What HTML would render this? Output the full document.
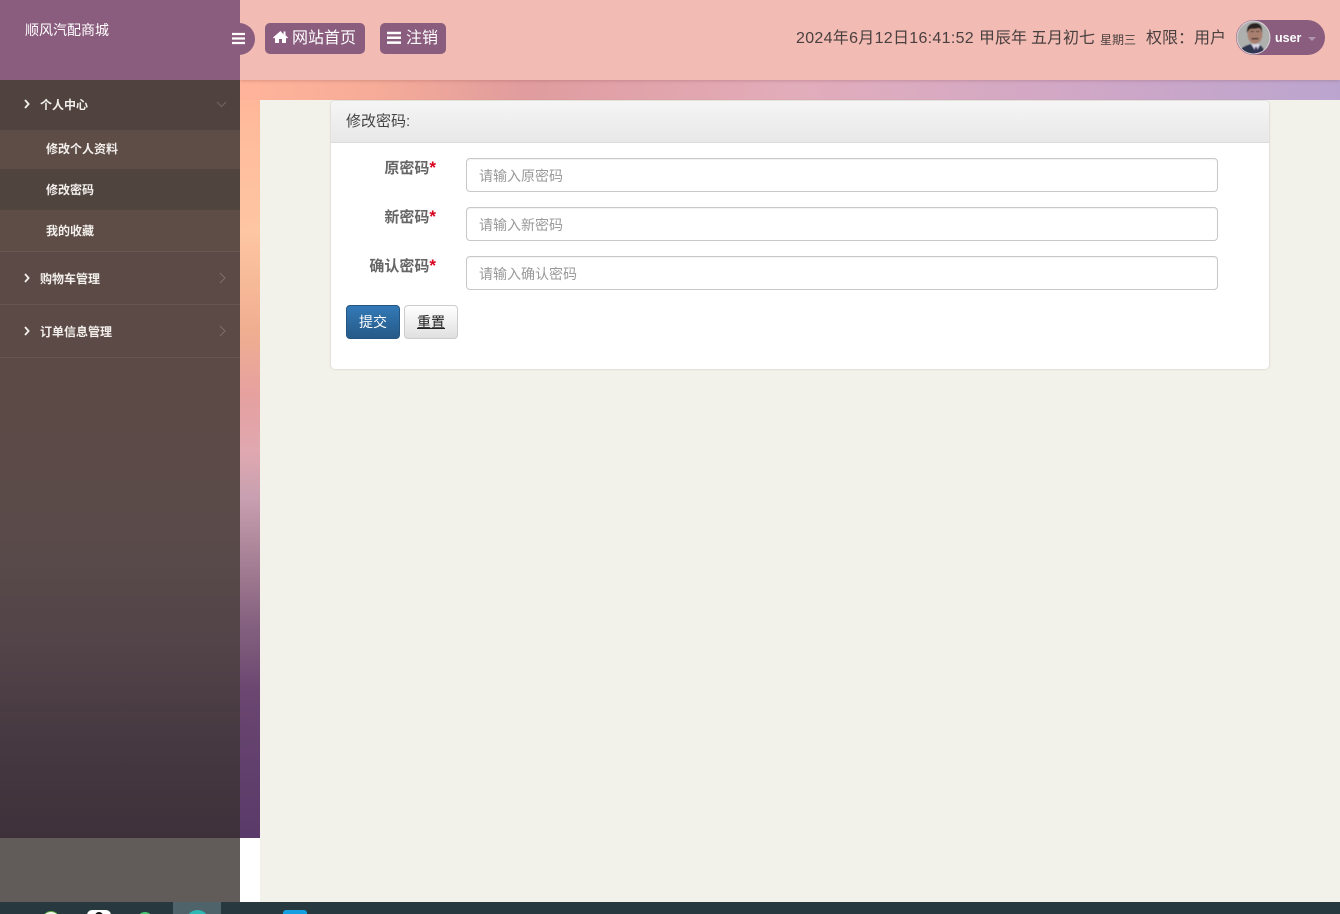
<!DOCTYPE html>
<html lang="zh">
<head>
<meta charset="utf-8">
<title>修改密码</title>
<style>
html,body{margin:0;padding:0;width:1340px;height:914px;overflow:hidden;background:#fff}
body{position:relative;font-family:"Liberation Sans","Noto Sans CJK SC",sans-serif;color:#333}
.a{position:absolute;white-space:nowrap}
svg{position:absolute;display:block}
.input{position:absolute;left:466px;width:750px;height:32px;border:1px solid #c8c8c8;border-radius:4px;background:#fff;box-shadow:inset 0 1px 1px rgba(0,0,0,.05);font-size:14px;line-height:35px;color:#999;text-indent:12px}
.lab{position:absolute;right:904px;font-size:15px;font-weight:700;color:#666;line-height:20px;white-space:nowrap}
.lab b{color:#d9001b;font-size:17px;line-height:16px}
.menu{font-size:12px;font-weight:700;color:#f2efec;line-height:18px}
.div{position:absolute;left:0;width:240px;height:1px;background:#675750}
</style>
</head>
<body>
<!-- page gradients -->
<div class="a" style="left:240px;top:80px;width:20px;height:758px;background:linear-gradient(180deg,#ffb298 0,#ffbb9c 6%,#fec6a2 20%,#f0ae90 33%,#e5a0a0 42%,#e0a8b0 49%,#c8a0b0 55%,#a07a90 65%,#84607f 72%,#6a4670 81%,#5a3a6a 100%)"></div>
<div class="a" style="left:240px;top:80px;width:1100px;height:20px;background:linear-gradient(90deg,#ffb49a 0,#f5ab98 13%,#e09c9e 26%,#e2adbb 51%,#cfa7c7 78%,#bba5cf 100%)"></div>
<div class="a" style="left:260px;top:100px;width:1080px;height:802px;background:#f3f2ea"></div>

<!-- sidebar -->
<div class="a" style="left:0;top:80px;width:240px;height:758px;background:linear-gradient(180deg,#5c4b46 0,#5c4a46 42%,#5a4b4a 60%,#524448 74%,#463840 88%,#3f313b 100%)"></div>
<div class="a" style="left:0;top:838px;width:240px;height:64px;background:#615c5a"></div>
<div class="a" style="left:0;top:80px;width:240px;height:50px;background:#50433f"></div>
<div class="a" style="left:0;top:130px;width:240px;height:39px;background:#5e4d46"></div>
<div class="a" style="left:0;top:169px;width:240px;height:41px;background:#50443f"></div>
<div class="a" style="left:0;top:210px;width:240px;height:41px;background:#5e4d46"></div>
<div class="div" style="top:251px"></div>
<div class="div" style="top:304px"></div>
<div class="div" style="top:357px"></div>

<div class="a menu" style="left:40px;top:96px">个人中心</div>
<div class="a menu" style="left:46px;top:140px">修改个人资料</div>
<div class="a menu" style="left:46px;top:181px">修改密码</div>
<div class="a menu" style="left:46px;top:222px">我的收藏</div>
<div class="a menu" style="left:40px;top:270px">购物车管理</div>
<div class="a menu" style="left:40px;top:323px">订单信息管理</div>

<svg style="left:24px;top:99px" width="8" height="10" viewBox="0 0 8 10"><path d="M1 1l3.600 4L1 9" fill="none" stroke="#f2efec" stroke-width="1.800"/></svg>
<svg style="left:24px;top:273px" width="8" height="10" viewBox="0 0 8 10"><path d="M1 1l3.600 4L1 9" fill="none" stroke="#f2efec" stroke-width="1.800"/></svg>
<svg style="left:24px;top:326px" width="8" height="10" viewBox="0 0 8 10"><path d="M1 1l3.600 4L1 9" fill="none" stroke="#f2efec" stroke-width="1.800"/></svg>
<svg style="left:216px;top:101px" width="11" height="7" viewBox="0 0 11 7"><path d="M1 1l4.500 4.500L10 1" fill="none" stroke="#75675f" stroke-width="1"/></svg>
<svg style="left:219px;top:272px" width="7" height="12" viewBox="0 0 7 12"><path d="M1 1l5 5-5 5" fill="none" stroke="#7d7068" stroke-width="1"/></svg>
<svg style="left:219px;top:325px" width="7" height="12" viewBox="0 0 7 12"><path d="M1 1l5 5-5 5" fill="none" stroke="#7d7068" stroke-width="1"/></svg>

<!-- header -->
<div class="a" style="left:240px;top:0;width:1100px;height:80px;background:#f2bbb3;box-shadow:0 1px 3px rgba(120,60,60,.25)"></div>
<div class="a" style="left:0;top:0;width:240px;height:80px;background:#8a5c7e"></div>
<div class="a" style="left:25px;top:20px;font-size:14px;line-height:20px;color:#fff">顺风汽配商城</div>

<div class="a" style="left:223px;top:23px;width:32px;height:32px;border-radius:50%;background:#8a5c7e"></div>
<svg style="left:232px;top:32px" width="13" height="13" viewBox="0 0 13 13"><path d="M0 2h13M0 6.500h13M0 11h13" stroke="#fff" stroke-width="2.300"/></svg>

<div class="a" style="left:265px;top:23px;width:100px;height:31px;border-radius:5px;background:#8a5c7e"></div>
<svg style="left:273px;top:30px" width="15" height="14" viewBox="0 0 15 14"><path d="M7.500 1L0 7.500l1 1 1-.8V13h4V9h3v4h4V7.700l1 .8 1-1-2.500-2.200V1.500h-2v3L7.500 1z" fill="#fff"/></svg>
<div class="a" style="left:292px;top:27px;font-size:16px;line-height:24px;color:#fff">网站首页</div>

<div class="a" style="left:380px;top:23px;width:66px;height:31px;border-radius:5px;background:#8a5c7e"></div>
<svg style="left:387px;top:31px" width="14" height="14" viewBox="0 0 14 14"><path d="M0 2h14M0 6.800h14M0 11.600h14" stroke="#fff" stroke-width="2.500"/></svg>
<div class="a" style="left:406px;top:27px;font-size:16px;line-height:24px;color:#fff">注销</div>

<div class="a" style="left:796px;top:27px;font-size:16px;line-height:24px;color:#4a4040;letter-spacing:.3px">2024年6月12日16:41:52</div>
<div class="a" style="left:979px;top:27px;font-size:16px;line-height:24px;color:#4a4040">甲辰年</div>
<div class="a" style="left:1031px;top:27px;font-size:16px;line-height:24px;color:#4a4040">五月初七</div>
<div class="a" style="left:1100px;top:28px;font-size:12px;line-height:24px;color:#4a4040">星期三</div>
<div class="a" style="left:1146px;top:27px;font-size:16px;line-height:24px;color:#4a4040">权限：用户</div>

<div class="a" style="left:1236px;top:20px;width:89px;height:35px;border-radius:18px;background:#8a5c7e"></div>
<svg style="left:1236px;top:20px" width="35" height="35" viewBox="0 0 35 35">
  <defs>
    <clipPath id="c"><circle cx="17.500" cy="17.500" r="16"/></clipPath>
    <filter id="f"><feGaussianBlur stdDeviation=".45"/></filter>
  </defs>
  <circle cx="17.500" cy="17.500" r="17" fill="#d9cfd6"/>
  <g clip-path="url(#c)" filter="url(#f)">
    <rect width="35" height="35" fill="#aeb0ae"/>
    <path d="M2 35c1-6 5-9 13-11h6c4 1 7 3 8 11z" fill="#2f3450"/>
    <path d="M15 24l5 8 4-7-3-2z" fill="#d5d5e4"/>
    <path d="M19 27h2l1 8h-4z" fill="#38305c"/>
    <ellipse cx="19" cy="14" rx="7.500" ry="10" fill="#a98070"/>
    <path d="M11 13C10 5 15 3 19.500 3s7.500 3 6.500 10c-.5-3-1.500-4.500-3-5-3 1-7 .5-9 1-1 1-2 2-3 4z" fill="#2a2120"/>
    <path d="M15.500 18h7v1.500h-7z" fill="#4a332c"/>
    <path d="M14.500 11.500h3.500M20 11.500h3.500" stroke="#3a2a26" stroke-width="1"/>
  </g>
</svg>
<div class="a" style="left:1275px;top:29px;font-size:12.500px;font-weight:700;line-height:18px;color:#fff">user</div>
<div class="a" style="left:1308px;top:37px;width:0;height:0;border-left:4px solid transparent;border-right:4px solid transparent;border-top:4px solid #b096ac"></div>

<!-- card -->
<div class="a" style="left:331px;top:101px;width:938px;height:268px;background:#fff;border-radius:4px;box-shadow:0 0 2px rgba(0,0,0,.2)"></div>
<div class="a" style="left:331px;top:101px;width:938px;height:41px;border-radius:4px 4px 0 0;background:linear-gradient(180deg,#f5f5f5,#e8e8e8);border-bottom:1px solid #dcdcdc"></div>
<div class="a" style="left:346px;top:112px;font-size:15px;line-height:20px;color:#444">修改密码:</div>

<div class="lab" style="top:159px">原密码<b>*</b></div>
<div class="input" style="top:158px">请输入原密码</div>
<div class="lab" style="top:208px">新密码<b>*</b></div>
<div class="input" style="top:207px">请输入新密码</div>
<div class="lab" style="top:257px">确认密码<b>*</b></div>
<div class="input" style="top:256px">请输入确认密码</div>

<div class="a" style="left:346px;top:305px;width:52px;height:32px;border:1px solid #245580;border-radius:4px;background:linear-gradient(180deg,#337ab7,#265a88);color:#fff;font-size:14px;line-height:33px;text-align:center">提交</div>
<div class="a" style="left:404px;top:305px;width:52px;height:32px;border:1px solid #ccc;border-radius:4px;background:linear-gradient(180deg,#fff,#e0e0e0);color:#222;font-size:14px;line-height:33px;text-align:center;text-decoration:underline">重置</div>

<!-- taskbar -->
<div class="a" style="left:0;top:902px;width:1340px;height:12px;background:#27393f;overflow:hidden">
  <div class="a" style="left:173px;top:0;width:48px;height:12px;background:#4f636a"></div>
  <div class="a" style="left:42px;top:9px;width:18px;height:18px;border-radius:50%;background:#f3f5ee;border-top:1px solid #5cae3e"></div>
  <div class="a" style="left:87px;top:8px;width:24px;height:20px;border-radius:5px;background:#fff"></div>
  <div class="a" style="left:95px;top:10px;width:8px;height:8px;border-radius:50%;background:#111"></div>
  <div class="a" style="left:137px;top:10px;width:16px;height:16px;border-radius:50%;background:#45c870"></div>
  <div class="a" style="left:186px;top:8px;width:23px;height:23px;border-radius:50%;background:#2fb9b4"></div>
  <div class="a" style="left:283px;top:8px;width:24px;height:20px;border-radius:3px;background:#14a0e0"></div>
</div>
</body>
</html>
